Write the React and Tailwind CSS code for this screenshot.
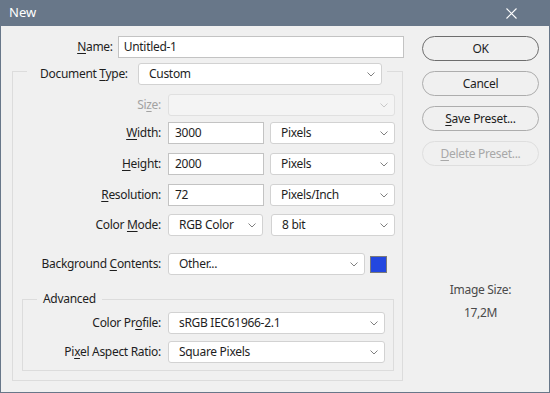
import React from 'react';

const font = { fontFamily: '"Noto Sans", "Open Sans", sans-serif' };

function Chevron({ disabled }) {
  return (
    <svg width="8" height="5" viewBox="0 0 8 5" className="shrink-0">
      <path d="M0.5 0.5 L4 4 L7.5 0.5" fill="none" stroke={disabled ? '#c8c8c8' : '#808080'} strokeWidth="1" />
    </svg>
  );
}

function Select({ w, value, disabled }) {
  return (
    <div
      className={`h-[22px] ${w} flex items-center justify-between pl-[10px] pr-[6px] rounded-[3px] border ${
        disabled ? 'bg-[#f4f4f4] border-[#e0e0e0]' : 'bg-white border-[#d2d2d2]'
      }`}
    >
      <span className="text-[#1e1e1e] whitespace-nowrap">{value}</span>
      <Chevron disabled={disabled} />
    </div>
  );
}

function Input({ w, value, pl = 'pl-[6px]' }) {
  return (
    <div className={`h-[22px] ${w} flex items-center ${pl} bg-white border border-[#c3c3c3]`}>
      <span className="text-[#1e1e1e] whitespace-nowrap">{value}</span>
    </div>
  );
}

function Row({ label, mt, lw = 'w-[155px]', muted, children }) {
  return (
    <div className={`flex items-center h-[22px] ${mt}`}>
      <div className={`${lw} shrink-0 text-right pr-[7px] whitespace-nowrap ${muted ? 'text-[#a2a2a2]' : 'text-[#1e1e1e]'}`}>
        {label}
      </div>
      {children}
    </div>
  );
}

function Btn({ children, primary, disabled }) {
  return (
    <div
      className={`h-[25px] w-[117px] rounded-full border flex items-center justify-center ${
        primary ? 'border-[#6e6e6e]' : disabled ? 'border-[#dedede] text-[#a8a8a8]' : 'border-[#adadad]'
      } ${disabled ? '' : 'text-[#1e1e1e]'}`}
    >
      {children}
    </div>
  );
}

const U = ({ children }) => <u className="underline underline-offset-[2px]">{children}</u>;

export default function App() {
  return (
    <div className="w-[550px] h-[393px] bg-[#687789] px-[1px] pb-[1px] flex flex-col text-[12px] tracking-[-0.3px]" style={font}>
      {/* title bar */}
      <div className="h-[26px] shrink-0 flex items-center justify-between pl-[8px] pr-[32px]">
        <span className="text-white text-[13px] tracking-normal">New</span>
        <svg width="11" height="11" viewBox="0 0 11 11">
          <path d="M0.5 0.5 L10.5 10.5 M10.5 0.5 L0.5 10.5" stroke="#ffffff" strokeWidth="1.1" />
        </svg>
      </div>

      <div className="flex-1 bg-[#f0f0f0] flex">
        {/* left side */}
        <div className="w-[403px] pl-[11px] pt-[10px]">
          <div className="flex items-center h-[22px]">
            <div className="w-[106px] text-right pr-[5px] text-[#1e1e1e]">
              <U>N</U>ame:
            </div>
            <Input w="w-[287px]" value="Untitled-1" pl="pl-[5px]" />
          </div>

          <div className="mt-[13px] w-[391px] border border-[#dcdcdc] pb-[9px]">
            <div className="-mt-[9px] ml-[14px] w-[360px] h-[22px] bg-[#f0f0f0] flex items-center pl-[13px]">
              <div className="w-[98px] whitespace-nowrap text-[#1e1e1e]">
                Document <U>T</U>ype:
              </div>
              <Select w="w-[244px]" value="Custom" />
            </div>

            <Row label={<>Si<U>z</U>e:</>} mt="mt-[9px]" muted>
              <Select w="w-[227px]" value="" disabled />
            </Row>
            <Row label={<><U>W</U>idth:</>} mt="mt-[6px]">
              <Input w="w-[96px]" value="3000" />
              <div className="ml-[6px]"><Select w="w-[125px]" value="Pixels" /></div>
            </Row>
            <Row label={<><U>H</U>eight:</>} mt="mt-[9px]">
              <Input w="w-[96px]" value="2000" />
              <div className="ml-[6px]"><Select w="w-[125px]" value="Pixels" /></div>
            </Row>
            <Row label={<><U>R</U>esolution:</>} mt="mt-[9px]">
              <Input w="w-[96px]" value="72" />
              <div className="ml-[6px]"><Select w="w-[125px]" value="Pixels/Inch" /></div>
            </Row>
            <Row label={<>Color <U>M</U>ode:</>} mt="mt-[8px]">
              <Select w="w-[95px]" value="RGB Color" />
              <div className="ml-[8px]"><Select w="w-[124px]" value="8 bit" /></div>
            </Row>
            <Row label={<>Background <U>C</U>ontents:</>} mt="mt-[17px]">
              <Select w="w-[197px]" value="Other..." />
              <div className="ml-[5px] w-[17px] h-[17px] bg-[#2347e0] border border-[#7a7a7a]" />
            </Row>

            <div className="mt-[24px] ml-[9px] w-[372px] border border-[#dcdcdc] pb-[7px]">
              <div className="-mt-[9px] ml-[14px] w-fit px-[6px] h-[16px] leading-[16px] bg-[#f0f0f0] text-[#1e1e1e]">
                Advanced
              </div>
              <Row label={<>Color Pr<U>o</U>file:</>} mt="mt-[5px]" lw="w-[145px]">
                <Select w="w-[217px]" value="sRGB IEC61966-2.1" />
              </Row>
              <Row label={<>Pi<U>x</U>el Aspect Ratio:</>} mt="mt-[7px]" lw="w-[145px]">
                <Select w="w-[217px]" value="Square Pixels" />
              </Row>
            </div>
          </div>
        </div>

        {/* right side */}
        <div className="pl-[18px] pt-[10px] flex flex-col">
          <div className="flex flex-col gap-[10px]">
            <Btn primary>OK</Btn>
            <Btn>Cancel</Btn>
            <Btn><span><U>S</U>ave Preset...</span></Btn>
            <Btn disabled><span><U>D</U>elete Preset...</span></Btn>
          </div>
          <div className="mt-[116px] text-center text-[#4a4a4a] leading-[16px]">Image Size:</div>
          <div className="mt-[7px] text-center text-[#4a4a4a] leading-[16px]">17,2M</div>
        </div>
      </div>
    </div>
  );
}
